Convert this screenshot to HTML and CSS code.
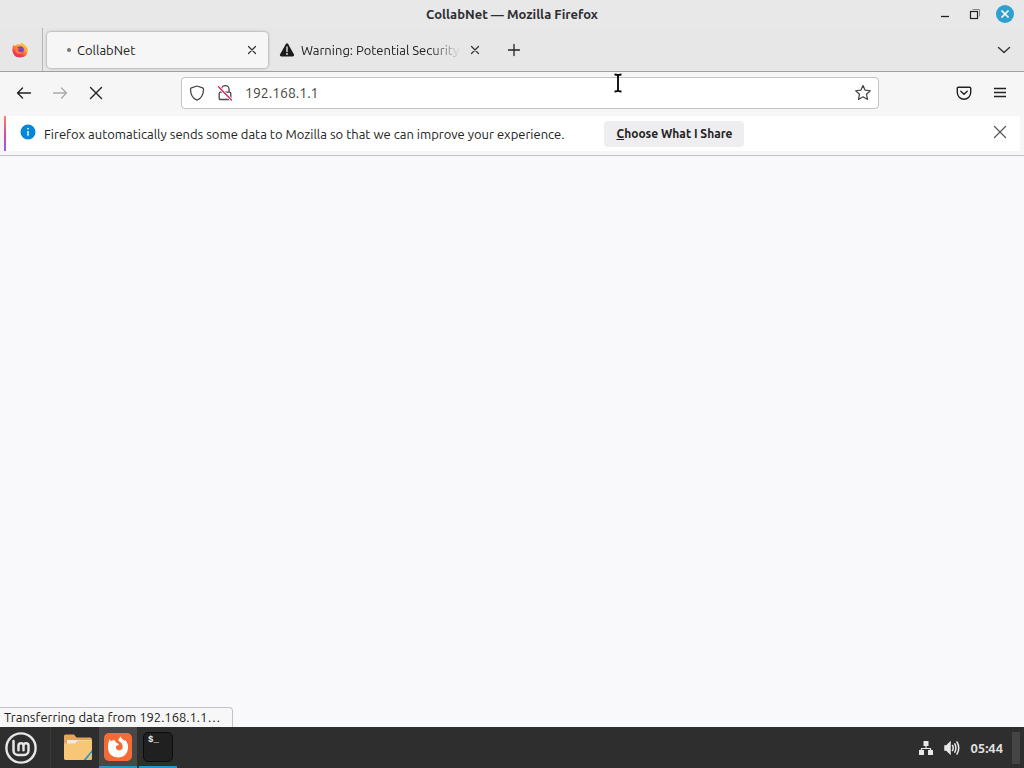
FILE: index.html
```html
<!DOCTYPE html>
<html lang="en">
<head>
<meta charset="utf-8">
<title>CollabNet — Mozilla Firefox</title>
<link rel="stylesheet" href="styles.css">
</head>
<body>
<div class="desktop">
  <section class="window">
    <header class="titlebar">
      <h1 class="window-title">CollabNet — Mozilla Firefox</h1>
      <div class="window-controls">
        <button class="icon-button" aria-label="Minimize"><svg width="20" height="20" viewBox="0 0 20 20"><path d="M6 12.500h8" stroke="#222" stroke-width="1.300"/></svg></button>
        <button class="icon-button" aria-label="Restore"><svg width="20" height="20" viewBox="0 0 20 20" fill="none"><path d="M7.500 5.500h7v7" stroke="#888"/><rect x="5.500" y="7.500" width="7" height="7" stroke="#222" stroke-width="1.200"/></svg></button>
        <button class="icon-button" aria-label="Close window"><svg width="20" height="20" viewBox="0 0 20 20"><circle cx="10" cy="10" r="9" fill="#2f9fd0"/><path d="M6.500 6.500l7 7M13.500 6.500l-7 7" stroke="#fff" stroke-width="1.700"/></svg></button>
      </div>
    </header>

    <nav class="tabs" aria-label="Tabs">
      <button class="firefox-view" aria-label="Firefox View">
        <svg width="18" height="18" viewBox="0 0 18 18">
          <defs><linearGradient id="flame" x1="0.850" y1="0" x2="0.250" y2="1"><stop offset="0" stop-color="#ffe23c"/><stop offset="0.450" stop-color="#ff9430"/><stop offset="0.750" stop-color="#fb3b4c"/><stop offset="1" stop-color="#e02578"/></linearGradient></defs>
          <path d="M2.500 3.500Q3.200 5 4.500 4.500Q6 3 7.500 3Q9 3.500 9.500 4Q9.500 2.500 10.800 1.200Q12 3 14 4Q17 6.500 16.600 10Q16 16.300 9 16.600Q2 16.300 1.400 9.600Q1.200 6 2.500 3.500Z" fill="url(#flame)"/>
          <circle cx="9.300" cy="8.800" r="3.600" fill="#8044bb"/>
          <path d="M3.500 7Q6.500 5.500 8.500 8Q6.500 8 7 10Q9.500 12 12.500 10.500Q10.500 14 6.500 12.800Q3.500 11 3.500 7Z" fill="#ff7b35"/>
        </svg>
      </button>
      <div class="tab tab-active">
        <span class="loading-dot"></span>
        <a class="tab-label" href="#page">CollabNet</a>
        <button class="icon-button" aria-label="Close CollabNet tab"><svg width="16" height="16" viewBox="0 0 16 16"><path d="M4.500 4.500l7 7M11.500 4.500l-7 7" stroke="#333" stroke-width="1.200" stroke-linecap="round"/></svg></button>
      </div>
      <div class="tab">
        <svg width="16" height="16" viewBox="0 0 16 16"><path d="M6.700 2.200Q8 .3 9.300 2.200L15 12.500Q15.500 14.500 13.500 14.600H2.500Q.5 14.500 1 12.500Z" fill="#1b1b1d"/><path d="M8 5v4.500" stroke="#e8e8e8" stroke-width="1.400" stroke-linecap="round"/><circle cx="8" cy="12" r=".9" fill="#e8e8e8"/></svg>
        <a class="tab-label tab-label-fade" href="#warning">Warning: Potential Security</a>
        <button class="icon-button" aria-label="Close Warning tab"><svg width="16" height="16" viewBox="0 0 16 16"><path d="M4.500 4.500l7 7M11.500 4.500l-7 7" stroke="#333" stroke-width="1.200" stroke-linecap="round"/></svg></button>
      </div>
      <button class="icon-button new-tab" aria-label="New tab"><svg width="16" height="16" viewBox="0 0 16 16"><path d="M8 2.500v11M2.500 8h11" stroke="#222" stroke-width="1.300" stroke-linecap="round"/></svg></button>
      <button class="icon-button all-tabs" aria-label="List all tabs"><svg width="16" height="16" viewBox="0 0 16 16" fill="none"><path d="M2.500 5.500L8 10.500l5.500-5" stroke="#333" stroke-width="1.400" stroke-linecap="round" stroke-linejoin="round"/></svg></button>
    </nav>

    <div class="toolbar">
      <div class="navigation">
        <button class="icon-button" aria-label="Back"><svg width="16" height="16" viewBox="0 0 16 16" fill="none"><path d="M14.500 8H1.500M6.500 3L1.500 8l5 5" stroke="#222" stroke-width="1.400" stroke-linecap="round" stroke-linejoin="round"/></svg></button>
        <button class="icon-button" aria-label="Forward" disabled><svg width="16" height="16" viewBox="0 0 16 16" fill="none"><path d="M1.500 8h13M9.500 3l5 5-5 5" stroke="#aaa" stroke-width="1.300" stroke-linecap="round" stroke-linejoin="round"/></svg></button>
        <button class="icon-button" aria-label="Stop"><svg width="16" height="16" viewBox="0 0 16 16"><path d="M2.500 2.500l11 11M13.500 2.500l-11 11" stroke="#222" stroke-width="1.400" stroke-linecap="round"/></svg></button>
      </div>
      <div class="urlbar">
        <button class="icon-button" aria-label="Tracking protection"><svg width="16" height="16" viewBox="0 0 16 16" fill="none"><path d="M8 1L13.600 2.900Q14.500 3.200 14.500 4.200C14.500 10 12 13.500 8 15.200C4 13.500 1.500 10 1.500 4.200Q1.500 3.200 2.400 2.900Z" stroke="#44444c" stroke-width="1.300" stroke-linejoin="round"/></svg></button>
        <button class="icon-button" aria-label="Connection not secure"><svg width="16" height="16" viewBox="0 0 16 16" fill="none"><path d="M4.500 7V4.500a3.800 3.800 0 0 1 7.600 0V7M3.500 7.200h9Q13.800 7.200 13.800 8.500v4.700q0 1.300-1.300 1.300h-9q-1.300 0-1.300-1.300V8.500q0-1.300 1.300-1.300z" stroke="#44444c" stroke-width="1.300"/><path d="M1.500 1.800L14.500 15" stroke="#fff" stroke-width="3"/><path d="M1.500 1.800L14.500 15" stroke="#df2454" stroke-width="1.400" stroke-linecap="round"/></svg></button>
        <input class="address" type="text" value="192.168.1.1" aria-label="Address">
        <button class="icon-button" aria-label="Bookmark this page"><svg width="18" height="18" viewBox="0 0 16 16" fill="none"><path d="M8 1.300l1.900 4.200 4.600.5-3.400 3.100.9 4.600L8 11.400 4 13.700l.9-4.600L1.500 6l4.600-.5z" stroke="#44444c" stroke-width="1.100" stroke-linejoin="round"/></svg></button>
      </div>
      <div class="toolbar-actions">
        <button class="icon-button" aria-label="Save to Pocket"><svg width="16" height="16" viewBox="0 0 16 16" fill="none"><path d="M2.300 2.200h11.400q1 0 1 1v4.300a6.700 6.700 0 0 1-13.400 0V3.200q0-1 1-1z" stroke="#222" stroke-width="1.400"/><path d="M4.800 6.200L8 9.200l3.200-3" stroke="#222" stroke-width="1.400" stroke-linecap="round" stroke-linejoin="round"/></svg></button>
        <button class="icon-button" aria-label="Application menu"><svg width="16" height="16" viewBox="0 0 16 16"><path d="M2 3.500h12M2 7.500h12M2 11.500h12" stroke="#222" stroke-width="1.300"/></svg></button>
      </div>
      <svg class="pointer" width="10" height="20" viewBox="0 0 10 20" fill="none" aria-hidden="true"><path d="M1.500 1.500Q5 1.500 5 3Q5 1.500 8.500 1.500M5 3v14M1.500 18.500Q5 18.500 5 17Q5 18.500 8.500 18.500" stroke="#000" stroke-width="1.800"/></svg>
    </div>

    <aside class="notice">
      <div class="notice-bar">
        <svg class="info" width="16" height="16" viewBox="0 0 16 16"><circle cx="8" cy="8" r="7.500" fill="#0486dd"/><path d="M8 7v4.700" stroke="#fff" stroke-width="1.400"/><circle cx="8" cy="4.600" r=".9" fill="#fff"/></svg>
        <p class="notice-text">Firefox automatically sends some data to Mozilla so that we can improve your experience.</p>
        <button class="share"><u>C</u>hoose What I Share</button>
        <button class="icon-button dismiss" aria-label="Dismiss"><svg width="16" height="16" viewBox="0 0 16 16"><path d="M2.500 2.500l11 11M13.500 2.500l-11 11" stroke="#55555c" stroke-width="1.200" stroke-linecap="round"/></svg></button>
      </div>
    </aside>

    <main class="page" id="page">
      <div class="status" role="status">Transferring data from 192.168.1.1…</div>
    </main>
  </section>

  <footer class="taskbar">
    <button class="mint" aria-label="Menu"><svg width="34" height="34" viewBox="0 0 34 34" fill="none" stroke="#e6e6e6" stroke-linecap="round" stroke-linejoin="round"><circle cx="17" cy="17" r="14.600" stroke-width="2.400"/><path d="M9.500 10v9.500a4.500 4.500 0 0 0 4.500 4.500h6a4.500 4.500 0 0 0 4.500-4.500V14.800a2.500 2.500 0 0 0-5 0v4.500M19.500 14.800a2.500 2.500 0 0 0-5 0v4.500" stroke-width="2.500"/></svg></button>
    <button class="task" aria-label="Files"><svg width="30" height="30" viewBox="0 0 30 30"><path d="M1 4Q1 2.500 2.500 2.500H11l2.500 3H27Q29 5.500 29 7.500V26Q29 28 27 28H3Q1 28 1 26Z" fill="#e6a64f"/><path d="M4 8h24v4H4z" fill="#eee9dc"/><path d="M1 11.500h11l3-3h14V26Q29 28 27 28H3Q1 28 1 26Z" fill="#f8c677"/><path d="M29 18v2.500L23 28H20.500z" fill="#2899cf"/><path d="M29 22v4q0 2-2 2h-2.500z" fill="#f0b766"/></svg></button>
    <button class="task task-focused" aria-label="Firefox"><svg width="30" height="30" viewBox="0 0 30 30"><rect x="1" y="1" width="28" height="28" rx="5" fill="#f46b36"/><path d="M6.500 7Q7 9 8.500 9Q10 8 11.500 8L13 10.500L16 12Q15.500 13.500 13 14Q12.500 18 16 18.500Q20.500 18 19.500 13.500Q19 10.500 15.500 9Q15.500 6.500 17.500 4.500Q19 7.500 22 9L22.500 8Q25.500 12 25 16.500Q24 25 15.500 25.500Q6.500 25.500 5 17Q4.500 12 6.500 7Z" fill="#fff"/></svg></button>
    <button class="task task-open" aria-label="Terminal"><span class="terminal">$_</span></button>
    <div class="tray">
      <button class="icon-button" aria-label="Network"><svg width="16" height="16" viewBox="0 0 16 16" fill="#e8e8e8"><path d="M5.500 1h5v5h-5zM1 10h5v5H1zM10 10h5v5h-5z"/><path d="M8 6v2.500M3.500 10.500V8.500h9v2" fill="none" stroke="#e8e8e8" stroke-width="1.200"/></svg></button>
      <button class="icon-button" aria-label="Volume"><svg width="16" height="16" viewBox="0 0 16 16" fill="none" stroke="#e8e8e8" stroke-width="1.500" stroke-linecap="round"><path d="M1 6h1.500L6 2.500v11L2.500 10H1z" fill="#e8e8e8"/><path d="M8.500 5.500Q10 8 8.500 10.500M10.800 3.800Q13 8 10.800 12.200M13 2Q16.500 8 13 14"/></svg></button>
      <time class="clock">05:44</time>
    </div>
    <button class="show-desktop" aria-label="Show desktop"></button>
  </footer>
</div>
</body>
</html>
```
FILE: styles.css
```css
* { box-sizing: border-box; }

body {
  margin: 0;
  font: 13px/20px Ubuntu, "Noto Sans", sans-serif;
  color: #222;
}

button {
  margin: 0;
  padding: 0;
  border: 0;
  background: none;
  font: inherit;
  color: inherit;
}

svg { display: block; flex: none; }

.desktop, .window { display: flex; flex-direction: column; }
.desktop { min-height: 100vh; }
.window { flex: 1; background: #f9f9fb; }
.icon-button { flex: none; display: grid; place-items: center; }

.titlebar {
  display: grid;
  grid-template-columns: 1fr auto 1fr;
  align-items: center;
  height: 28px;
  background: #e8e8e8;
}
.window-title {
  grid-column: 2;
  margin: 0;
  font-size: 13px;
  font-weight: 600;
  color: #2e2e33;
}
.window-controls {
  display: flex;
  gap: 10px;
  justify-content: flex-end;
  padding-right: 9px;
}

.tabs {
  display: flex;
  align-items: center;
  height: 44px;
  padding-right: 12px;
  border-bottom: 1px solid #a0a0a0;
  background: #e7e7e7;
}
.firefox-view {
  display: grid;
  place-items: center;
  align-self: stretch;
  width: 43px;
  padding-right: 2px;
  border-right: 1px solid #b4b4b4;
}
.tab {
  display: flex;
  align-items: center;
  gap: 6px;
  width: 221px;
  height: 36px;
  padding: 0 6px 0 11px;
}
.tab-active {
  margin-left: 4px;
  padding: 0 8px 0 20px;
  border-radius: 4px;
  background: #f6f6f6;
  box-shadow: 0 0 3px #888;
}
.loading-dot {
  width: 4px;
  height: 4px;
  border-radius: 50%;
  background: #777;
}
.tab-label {
  flex: 1;
  white-space: nowrap;
  color: inherit;
  text-decoration: none;
}
.tab-label-fade {
  mask-image: linear-gradient(to left, transparent, #000 32px);
}
.new-tab { margin-left: 17px; }
.all-tabs { margin-left: auto; }

.toolbar {
  position: relative;
  display: grid;
  grid-template-columns: 165px 1fr 129px;
  gap: 8px;
  align-items: center;
  height: 42px;
  padding: 0 8px;
  background: #f6f6f6;
}
.navigation, .toolbar-actions { display: flex; gap: 20px; padding: 0 8px; }
.toolbar-actions { justify-content: flex-end; padding-bottom: 1px; }
.urlbar {
  display: flex;
  align-items: center;
  gap: 12px;
  height: 32px;
  padding: 0 6px 0 7px;
  border: 1px solid #c4c4c4;
  border-radius: 4px;
  background: #fff;
}
.address {
  flex: 1;
  min-width: 0;
  padding: 0;
  border: 0;
  outline: 0;
  background: none;
  font: 14px/20px Ubuntu, "Noto Sans", sans-serif;
  color: #46463c;
}
.pointer { position: absolute; left: 613px; top: 1px; }

.notice {
  padding: 2px 4px 4px;
  border-bottom: 1px solid #c2c2c4;
  background: #f6f6f6;
}
.notice-bar {
  display: flex;
  align-items: center;
  min-height: 35px;
  padding: 0 12px 0 14px;
  border-left: 2px solid;
  border-image: linear-gradient(#ff8a50, #dc4b9b, #9059ff) 1;
  background: #fff;
}
.info, .dismiss { margin-bottom: 3px; }
.notice-text { margin: 0 40px 0 8px; }
.share {
  height: 26px;
  padding: 0 12px;
  border-radius: 4px;
  background: #eeeef0;
  font-size: 12px;
  font-weight: 700;
}
.dismiss { margin-left: auto; }

.page { flex: 1; display: flex; align-items: flex-end; }
.status {
  padding: 0 12px 0 4px;
  border: 1px solid #c4c4c8;
  border-width: 1px 1px 0 0;
  border-radius: 0 4px 0 0;
  background: #f7f7f7;
  line-height: 19px;
}

.taskbar {
  display: flex;
  height: 41px;
  background: #2e2e2e;
}
.mint {
  display: grid;
  place-items: center;
  width: 51px;
  padding-right: 9px;
  border-right: 1px solid #3a3a3a;
}
.task {
  display: grid;
  place-items: center;
  width: 38px;
  margin-right: 2px;
  border-bottom: 2px solid transparent;
}
.mint + .task { margin-left: 8px; }
.task-focused, .task-open { border-color: #2a93c6; }
.task-focused { background: #484848; }
.terminal {
  width: 30px;
  height: 30px;
  padding-left: 4px;
  border: 1px solid #0c0c0c;
  border-radius: 5px;
  background: #202020;
  font: bold 9px/14px "Liberation Mono", monospace;
  text-align: left;
  color: #eee;
}
.tray {
  display: flex;
  align-items: center;
  gap: 10px;
  margin-left: auto;
  padding-right: 9px;
}
.clock { font-weight: 600; color: #e0e0e0; }
.show-desktop {
  align-self: center;
  width: 8px;
  height: 32px;
  margin-right: 4px;
  background: #454545;
}
```
